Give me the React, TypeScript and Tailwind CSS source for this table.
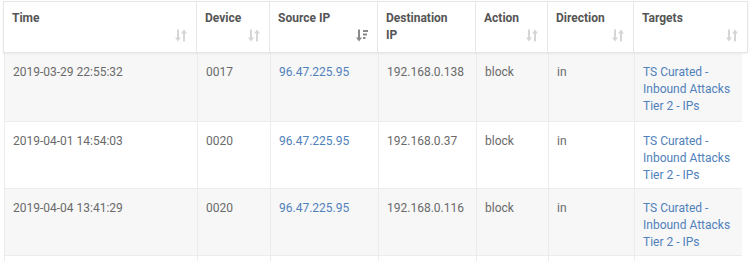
import React from "react";

const cols = [
  { label: "Time", w: "w-[192px]" },
  { label: "Device", w: "w-[73px]" },
  { label: "Source IP", w: "w-[108px]" },
  { label: "Destination IP", w: "w-[98px]" },
  { label: "Action", w: "w-[72px]" },
  { label: "Direction", w: "w-[86px]" },
  { label: "Targets", w: "w-[115px]" },
];

const bodyW = ["w-[192px]", "w-[73px]", "w-[108px]", "w-[98px]", "w-[72px]", "w-[86px]", "w-[108px]"];

const rows = [
  { time: "2019-03-29 22:55:32", dev: "0017", src: "96.47.225.95", dst: "192.168.0.138", bg: "bg-[#f7f7f7]", h: "h-[69px]" },
  { time: "2019-04-01 14:54:03", dev: "0020", src: "96.47.225.95", dst: "192.168.0.37", bg: "bg-white", h: "h-[67px]" },
  { time: "2019-04-04 13:41:29", dev: "0020", src: "96.47.225.95", dst: "192.168.0.116", bg: "bg-[#f7f7f7]", h: "h-[67px]" },
];

function SortIcon({ active }: { active?: boolean }) {
  if (active) {
    return (
      <svg width="12" height="13" viewBox="0 0 12 13" className="shrink-0">
        <g fill="#8a8a8a">
          <rect x="2" y="0.5" width="2" height="9" />
          <polygon points="0,8.5 6,8.5 3,12.5" />
          <rect x="7" y="1" width="5" height="2" />
          <rect x="7" y="4.5" width="4" height="2" />
          <rect x="7" y="8" width="2.5" height="2" />
        </g>
      </svg>
    );
  }
  return (
    <svg width="12" height="13" viewBox="0 0 12 13" className="shrink-0">
      <g fill="#d6d6d6">
        <rect x="2" y="0.5" width="2" height="9" />
        <polygon points="0,8.5 6,8.5 3,12.5" />
        <rect x="8" y="3.5" width="2" height="9" />
        <polygon points="6,4.5 12,4.5 9,0.5" />
      </g>
    </svg>
  );
}

export default function App() {
  return (
    <div
      className="w-[750px] h-[261px] bg-white overflow-hidden pt-[1px] pl-[3px]"
      style={{ fontFamily: "Roboto, 'Liberation Sans', sans-serif" }}
    >
      <div className="flex w-[745px] border border-[#e6e6e6] h-[52px] bg-white shadow-[0_1px_2px_rgba(0,0,0,0.06)] relative z-10">
        {cols.map((c, i) => (
          <div
            key={c.label}
            className={`${c.w} ${i > 0 ? "border-l border-[#e6e6e6]" : ""} flex flex-col justify-between pl-[8px] pr-[9px] pt-[8px] pb-[10px] shrink-0 ${i === 6 ? "flex-1" : ""}`}
          >
            <div className="text-[12px] leading-[17px] font-bold text-[#555555]">
              {c.label === "Destination IP" ? (
                <>
                  Destination
                  <br />
                  IP
                </>
              ) : (
                c.label
              )}
            </div>
            {c.label !== "Destination IP" && (
              <div className="flex justify-end">
                <SortIcon active={c.label === "Source IP"} />
              </div>
            )}
          </div>
        ))}
      </div>
      <div className="w-[738px] ml-[1px] border-l border-[#ececec]">
        {rows.map((r, idx) => (
          <div key={idx} className={`flex ${r.h} ${r.bg} border-b border-[#ececec]`}>
            {[r.time, r.dev, r.src, r.dst, "block", "in", "T"].map((v, i) => (
              <div
                key={i}
                className={`${bodyW[i]} shrink-0 ${i > 0 ? "border-l border-[#ececec]" : ""} pl-[8px] pt-[11px] text-[12px] leading-[17px] ${
                  i === 2 || i === 6 ? "text-[#5081bb]" : "text-[#6a6a6a]"
                }`}
              >
                {i === 6 ? (
                  <>
                    TS Curated -
                    <br />
                    Inbound Attacks
                    <br />
                    Tier 2 - IPs
                  </>
                ) : (
                  v
                )}
              </div>
            ))}
          </div>
        ))}
        <div className="flex h-[10px]">
          {bodyW.map((w, i) => (
            <div key={i} className={`${w} shrink-0 ${i > 0 ? "border-l border-[#ececec]" : ""}`} />
          ))}
        </div>
      </div>
    </div>
  );
}
